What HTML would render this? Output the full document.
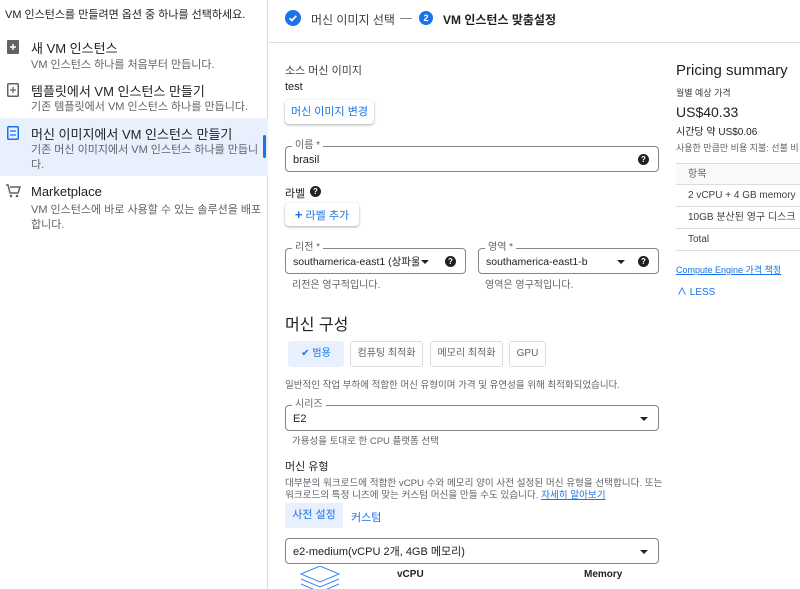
<!DOCTYPE html>
<html><head><meta charset="utf-8"><style>
*{box-sizing:border-box;margin:0;padding:0}
body{width:800px;height:589px;overflow:hidden;background:#fff;font-family:"Liberation Sans","Noto Sans CJK KR",sans-serif;color:#202124;position:relative}
.a{position:absolute;white-space:nowrap}
.s{font-size:11px;color:#5f6368}
.fld{position:absolute;border:1px solid #80868b;border-radius:4px;height:26px}
.fld .lb{position:absolute;top:-7px;left:6px;background:#fff;padding:0 3px;font-size:10px;color:#5f6368;line-height:12px}
.fld .v{position:absolute;left:7px;top:7px;font-size:11px;color:#202124;line-height:12px;white-space:nowrap}
.q{position:absolute;width:11px;height:11px;border-radius:50%;background:#202124;color:#fff;font-size:8px;font-weight:bold;text-align:center;line-height:11px}
.arr{position:absolute;width:0;height:0;border-left:4px solid transparent;border-right:4px solid transparent;border-top:4px solid #202124}
.btn{position:absolute;border-radius:4px;box-shadow:0 1px 2px rgba(60,64,67,.3),0 1px 3px rgba(60,64,67,.15);background:#fff;color:#1a73e8;font-size:11px;text-align:center}
.chip{position:absolute;border:1px solid #dadce0;border-radius:3px;height:26px;font-size:10px;color:#5f6368;text-align:center;line-height:24px}
.row{position:absolute;left:676px;width:124px;height:22px;border-bottom:1px solid #dadce0;font-size:10px;padding-left:12px;line-height:22px;color:#3c4043}
</style></head><body>
<div class="a" style="left:0;top:0;width:268px;height:589px;border-right:1px solid #dadce0"></div>
<div class="a" style="left:5px;top:6px;font-size:11px">VM 인스턴스를 만들려면 옵션 중 하나를 선택하세요.</div>
<div class="a" style="left:0;top:118px;width:268px;height:58px;background:#e8f0fe"></div>
<div class="a" style="left:263px;top:135px;width:3px;height:23px;background:#1a73e8;border-radius:2px"></div>
<svg class="a" style="left:7px;top:40px" width="12" height="14"><rect x="0" y="0" width="12" height="14" rx="1" fill="#5f6368"/><path d="M6 4v6M3 7h6" stroke="#fff" stroke-width="1.5"/></svg>
<div class="a" style="left:31px;top:38px;font-size:13px">새 VM 인스턴스</div>
<div class="a s" style="left:31px;top:56px">VM 인스턴스 하나를 처음부터 만듭니다.</div>
<svg class="a" style="left:7px;top:83px" width="12" height="14"><rect x="0.75" y="0.75" width="10.5" height="12.5" rx="1" fill="none" stroke="#5f6368" stroke-width="1.5"/><path d="M6 4v6M3 7h6" stroke="#5f6368" stroke-width="1.3"/></svg>
<div class="a" style="left:31px;top:81px;font-size:13px">템플릿에서 VM 인스턴스 만들기</div>
<div class="a s" style="left:31px;top:98px">기존 템플릿에서 VM 인스턴스 하나를 만듭니다.</div>
<svg class="a" style="left:7px;top:126px" width="12" height="14"><rect x="0.75" y="0.75" width="10.5" height="12.5" rx="1" fill="none" stroke="#1a73e8" stroke-width="1.5"/><path d="M3 5h6M3 9h6" stroke="#1a73e8" stroke-width="1.3"/></svg>
<div class="a" style="left:31px;top:124px;font-size:13px">머신 이미지에서 VM 인스턴스 만들기</div>
<div class="a s" style="left:31px;top:141px">기존 머신 이미지에서 VM 인스턴스 하나를 만듭니</div>
<div class="a s" style="left:31px;top:156px">다.</div>
<svg class="a" style="left:5px;top:183px" width="16" height="16"><path d="M1 2h2l2 8h8l2-6H5" fill="none" stroke="#5f6368" stroke-width="1.5"/><circle cx="6" cy="13" r="1.3" fill="#5f6368"/><circle cx="12" cy="13" r="1.3" fill="#5f6368"/></svg>
<div class="a" style="left:31px;top:184px;font-size:13px">Marketplace</div>
<div class="a s" style="left:31px;top:201px">VM 인스턴스에 바로 사용할 수 있는 솔루션을 배포</div>
<div class="a s" style="left:31px;top:216px">합니다.</div>
<div class="a" style="left:269px;top:42px;width:531px;height:1px;background:#dadce0"></div>
<svg class="a" style="left:285px;top:10px" width="16" height="16"><circle cx="8" cy="8" r="8" fill="#1a73e8"/><path d="M4.5 8.2l2.3 2.3 4.5-4.6" fill="none" stroke="#fff" stroke-width="1.7"/></svg>
<div class="a" style="left:311px;top:11px;font-size:12px;color:#3c4043">머신 이미지 선택</div>
<div class="a" style="left:400px;top:18px;width:12px;height:1px;background:#80868b"></div>
<div class="a" style="left:419px;top:11px;width:14px;height:14px;border-radius:50%;background:#1a73e8;color:#fff;font-size:9px;font-weight:bold;text-align:center;line-height:14px">2</div>
<div class="a" style="left:443px;top:11px;font-size:12px;font-weight:bold">VM 인스턴스 맞춤설정</div>
<div class="a" style="left:285px;top:62px;font-size:11px;color:#3c4043">소스 머신 이미지</div>
<div class="a" style="left:285px;top:81px;font-size:11px">test</div>
<div class="btn" style="left:285px;top:100px;width:89px;height:24px;line-height:24px">머신 이미지 변경</div>
<div class="fld" style="left:285px;top:146px;width:374px"><span class="lb">이름 *</span><span class="v">brasil</span><div class="q" style="right:9px;top:7px">?</div></div>
<div class="a" style="left:285px;top:185px;font-size:11px">라벨</div>
<div class="q" style="left:310px;top:186px">?</div>
<div class="btn" style="left:285px;top:203px;width:74px;height:23px;line-height:23px"><b style="font-size:13px">+</b> 라벨 추가</div>
<div class="fld" style="left:285px;top:248px;width:181px"><span class="lb">리전 *</span><span class="v" style="font-size:10.5px;width:126px;overflow:hidden">southamerica-east1 (상파울...</span><div class="arr" style="left:135px;top:11px"></div><div class="q" style="right:9px;top:7px">?</div></div>
<div class="a s" style="left:292px;top:276px;font-size:10px">리전은 영구적입니다.</div>
<div class="fld" style="left:478px;top:248px;width:181px"><span class="lb">영역 *</span><span class="v" style="font-size:10.5px">southamerica-east1-b</span><div class="arr" style="left:138px;top:11px"></div><div class="q" style="right:9px;top:7px">?</div></div>
<div class="a s" style="left:485px;top:276px;font-size:10px">영역은 영구적입니다.</div>
<div class="a" style="left:285px;top:311px;font-size:16px">머신 구성</div>
<div class="chip" style="left:288px;top:341px;width:56px;background:#e8f0fe;color:#1a73e8;border-color:#e8f0fe">✔ 범용</div>
<div class="chip" style="left:350px;top:341px;width:73px">컴퓨팅 최적화</div>
<div class="chip" style="left:430px;top:341px;width:73px">메모리 최적화</div>
<div class="chip" style="left:509px;top:341px;width:37px">GPU</div>
<div class="a s" style="left:285px;top:377px;font-size:9.5px">일반적인 작업 부하에 적합한 머신 유형이며 가격 및 유연성을 위해 최적화되었습니다.</div>
<div class="fld" style="left:285px;top:405px;width:374px"><span class="lb">시리즈</span><span class="v">E2</span><div class="arr" style="right:10px;top:11px"></div></div>
<div class="a s" style="left:292px;top:433px;font-size:9.5px">가용성을 토대로 한 CPU 플랫폼 선택</div>
<div class="a" style="left:285px;top:458px;font-size:11px">머신 유형</div>
<div class="a s" style="left:285px;top:475px;font-size:9.6px">대부분의 워크로드에 적합한 vCPU 수와 메모리 양이 사전 설정된 머신 유형을 선택합니다. 또는</div>
<div class="a s" style="left:285px;top:487px;font-size:9.6px">워크로드의 특정 니즈에 맞는 커스텀 머신을 만들 수도 있습니다. <span style="color:#1a73e8;text-decoration:underline">자세히 알아보기</span></div>
<div class="a" style="left:285px;top:503px;width:58px;height:25px;background:#e8f0fe;color:#1a73e8;font-size:11px;text-align:center;line-height:25px">사전 설정</div>
<div class="a" style="left:351px;top:509px;font-size:11px;color:#1a73e8">커스텀</div>
<div class="fld" style="left:285px;top:538px;width:374px"><span class="v">e2-medium(vCPU 2개, 4GB 메모리)</span><div class="arr" style="right:10px;top:11px"></div></div>
<svg class="a" style="left:298px;top:566px" width="45" height="23"><path d="M3 8l19-8 19 8-19 8z M3 13l19 8 19-8 M3 18l19 8 19-8" fill="none" stroke="#4285f4" stroke-width="1"/></svg>
<div class="a" style="left:397px;top:569px;font-size:10px;font-weight:bold">vCPU</div>
<div class="a" style="left:584px;top:569px;font-size:10px;font-weight:bold">Memory</div>
<div class="a" style="left:676px;top:62px;font-size:15px;font-weight:500">Pricing summary</div>
<div class="a" style="left:676px;top:86px;font-size:9px;color:#3c4043">월별 예상 가격</div>
<div class="a" style="left:676px;top:104px;font-size:14px">US$40.33</div>
<div class="a" style="left:676px;top:123px;font-size:10px">시간당 약 US$0.06</div>
<div class="a s" style="left:676px;top:141px;font-size:9px">사용한 만큼만 비용 지불: 선불 비</div>
<div class="row" style="top:163px;background:#f8f9fa;color:#5f6368;border-top:1px solid #dadce0">항목</div>
<div class="row" style="top:185px">2 vCPU + 4 GB memory</div>
<div class="row" style="top:207px">10GB 분산된 영구 디스크</div>
<div class="row" style="top:229px">Total</div>
<div class="a" style="left:676px;top:263px;font-size:9px;color:#1a73e8;text-decoration:underline">Compute Engine 가격 책정</div>
<div class="a" style="left:677px;top:283px;font-size:10px;color:#1a73e8;font-weight:500">∧ LESS</div>
</body></html>
